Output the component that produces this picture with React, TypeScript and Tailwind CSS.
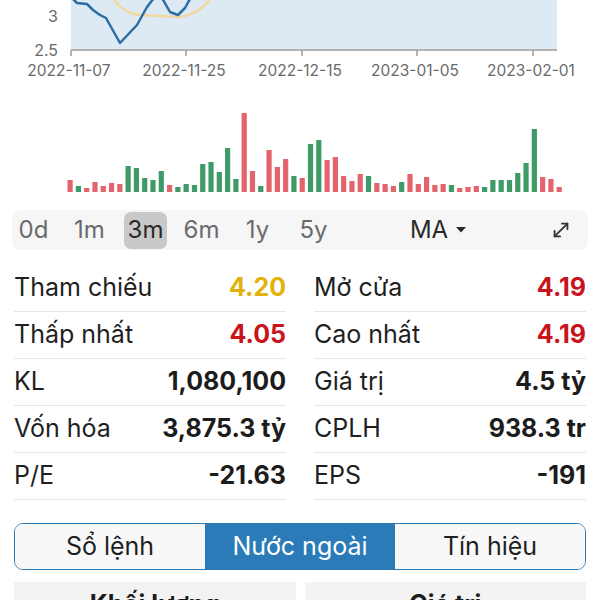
import { MoveDiagonal } from "lucide-react";

const vols: [number, "r" | "g"][] = [
  [12, "r"], [6, "g"], [4, "r"], [10, "r"], [6, "r"], [9, "r"], [8, "r"], [26, "g"], [24, "g"], [14, "g"],
  [12, "g"], [21, "g"], [7, "r"], [5, "g"], [8, "g"], [7, "g"], [28, "g"], [30, "g"], [20, "g"], [44, "g"],
  [13, "g"], [79, "r"], [21, "r"], [6, "g"], [42, "r"], [25, "r"], [33, "r"], [16, "g"], [14, "r"], [48, "g"],
  [52, "g"], [32, "r"], [35, "r"], [16, "r"], [11, "r"], [18, "r"], [16, "g"], [9, "r"], [8, "r"], [6, "r"],
  [10, "g"], [18, "r"], [8, "r"], [15, "r"], [7, "r"], [8, "r"], [7, "g"], [4, "r"], [5, "r"], [6, "r"],
  [5, "g"], [12, "g"], [12, "g"], [12, "g"], [19, "g"], [29, "g"], [63, "g"], [15, "r"], [13, "r"], [5, "r"],
];

const ranges = ["0d", "1m", "3m", "6m", "1y", "5y"];

const left = [
  { label: "Tham chiếu", value: "4.20", color: "text-[#e2b20c]" },
  { label: "Thấp nhất", value: "4.05", color: "text-[#c8141c]" },
  { label: "KL", value: "1,080,100", color: "text-[#1c1c1c]" },
  { label: "Vốn hóa", value: "3,875.3 tỷ", color: "text-[#1c1c1c]" },
  { label: "P/E", value: "-21.63", color: "text-[#1c1c1c]" },
];

const right = [
  { label: "Mở cửa", value: "4.19", color: "text-[#c8141c]" },
  { label: "Cao nhất", value: "4.19", color: "text-[#c8141c]" },
  { label: "Giá trị", value: "4.5 tỷ", color: "text-[#1c1c1c]" },
  { label: "CPLH", value: "938.3 tr", color: "text-[#1c1c1c]" },
  { label: "EPS", value: "-191", color: "text-[#1c1c1c]" },
];

const xTicks = [
  { x: 71, label: "2022-11-07" },
  { x: 186, label: "2022-11-25" },
  { x: 302, label: "2022-12-15" },
  { x: 417, label: "2023-01-05" },
  { x: 533, label: "2023-02-01" },
];

function PriceChart() {
  return (
    <svg width="600" height="90" className="block" style={{ fontFamily: "Inter, sans-serif" }}>
      <rect x="71" y="-2" width="486" height="51" fill="#dde9f3" />
      <path
        d="M113,-2 Q122,13 140,15 L180,17 Q200,14 211,-2"
        fill="none"
        stroke="#f2d8a2"
        strokeWidth="2.5"
      />
      <path
        d="M71,-3 L77,3 L87,4 L93,10 L100,15 L106,18 L120,43 L137,25 L147,7 L154,-2 L162,-2 L170,12 L178,15 L185,8 L191,-3"
        fill="none"
        stroke="#2c6ea3"
        strokeWidth="2.5"
        strokeLinejoin="round"
      />
      <line x1="71" y1="50" x2="557" y2="50" stroke="#9a9a9a" strokeWidth="1.5" />
      {xTicks.map((t) => (
        <g key={t.label}>
          <line x1={t.x} y1="50" x2={t.x} y2="56" stroke="#9a9a9a" strokeWidth="1.5" />
          <text x={t.x - 2} y="76" textAnchor="middle" fontSize="15.5" fill="#6a6a6a">
            {t.label}
          </text>
        </g>
      ))}
      <text x="58" y="22" textAnchor="end" fontSize="16" fill="#6a6a6a">3</text>
      <text x="58" y="56" textAnchor="end" fontSize="16" fill="#6a6a6a">2.5</text>
    </svg>
  );
}

function VolumeChart() {
  return (
    <svg width="600" height="105" className="block">
      {vols.map(([h, c], i) => (
        <rect
          key={i}
          x={67.5 + i * 8.29}
          y={102 - h}
          width="5.2"
          height={h}
          fill={c === "r" ? "#e3646d" : "#3e9b67"}
        />
      ))}
    </svg>
  );
}

function StatColumn({ rows }: { rows: typeof left }) {
  return (
    <div className="flex flex-col">
      {rows.map((r) => (
        <div
          key={r.label}
          className="flex h-[47px] items-center justify-between border-b border-[#e6e6e6] text-[25px]"
        >
          <span className="text-[#1f1f1f]">{r.label}</span>
          <span className={`font-bold ${r.color}`}>{r.value}</span>
        </div>
      ))}
    </div>
  );
}

export default function App() {
  return (
    <div
      className="h-[600px] w-[600px] overflow-hidden bg-white"
      style={{ fontFamily: "Inter, 'Liberation Sans', sans-serif" }}
    >
      <PriceChart />
      <VolumeChart />

      <div className="mx-[12px] mt-[15px] flex h-[40px] items-center rounded-[9px] bg-[#f6f6f6] pr-[7px]">
        <div className="flex gap-[13px]">
          {ranges.map((r) => (
            <div
              key={r}
              className={`flex h-[37px] w-[43px] items-center justify-center rounded-[7px] text-[24px] ${
                r === "3m" ? "bg-[#c9c9c9] text-[#2a2a2a]" : "text-[#6b6b6b]"
              }`}
            >
              {r}
            </div>
          ))}
        </div>
        <div className="flex flex-1 items-center justify-center gap-[8px] text-[24px] text-[#2a2a2a]">
          <span>MA</span>
          <svg width="10" height="6" viewBox="0 0 10 6">
            <path d="M0,0 L10,0 L5,5.5 Z" fill="#2a2a2a" />
          </svg>
        </div>
        <div className="flex w-[40px] justify-center text-[#333]">
          <MoveDiagonal size={22} strokeWidth={2} />
        </div>
      </div>

      <div className="mx-[14px] mt-[15px] grid grid-cols-2 gap-[28px]">
        <StatColumn rows={left} />
        <StatColumn rows={right} />
      </div>

      <div className="mx-[14px] mt-[23px] grid h-[47px] grid-cols-3 overflow-hidden rounded-[9px] border-[1.5px] border-[#2b7bb9] text-[25px]">
        <div className="flex items-center justify-center bg-[#f8f8f8] text-[#1f1f1f]">Sổ lệnh</div>
        <div className="flex items-center justify-center bg-[#2b7bb9] text-white">Nước ngoài</div>
        <div className="flex items-center justify-center bg-[#f8f8f8] text-[#1f1f1f]">Tín hiệu</div>
      </div>

      <div className="mx-[14px] mt-[12px] grid grid-cols-2 gap-[9px]">
        <div className="flex h-[60px] justify-center bg-[#f3f3f3] pt-[4px] text-[25px] font-bold text-[#1c1c1c]">
          Khối lượng
        </div>
        <div className="flex h-[60px] justify-center bg-[#f3f3f3] pt-[4px] text-[25px] font-bold text-[#1c1c1c]">
          Giá trị
        </div>
      </div>
    </div>
  );
}
